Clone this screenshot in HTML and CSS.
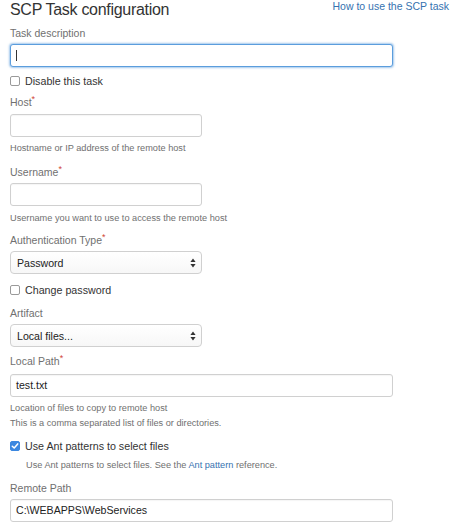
FILE: index.html
```html
<!DOCTYPE html>
<html>
<head>
<meta charset="utf-8">
<link rel="stylesheet" href="styles.css">
</head>
<body>
<div class="page">
  <div class="header">
    <h1 class="title">SCP Task configuration</h1>
    <a class="doc-link" href="#">How to use the SCP task</a>
  </div>

  <div class="label m5">Task description</div>
  <div class="input wide focused m3"><span class="caret"></span></div>

  <div class="check m6"><span class="box"></span><span>Disable this task</span></div>

  <div class="label m5">Host<span class="req">*</span></div>
  <div class="input short m4"></div>
  <div class="help m4">Hostname or IP address of the remote host</div>

  <div class="label m8">Username<span class="req">*</span></div>
  <div class="input short m3"></div>
  <div class="help m5">Username you want to use to access the remote host</div>

  <div class="label m6">Authentication Type<span class="req">*</span></div>
  <div class="select m3"><span>Password</span><span class="arrows"><svg width="6" height="10" viewBox="0 0 6 10"><path d="M3 0.5L5.6 4H0.4Z M3 9.5L0.4 6H5.6Z" fill="#333"/></svg></span></div>

  <div class="check m8"><span class="box"></span><span>Change password</span></div>

  <div class="label m7">Artifact</div>
  <div class="select m3"><span>Local files...</span><span class="arrows"><svg width="6" height="10" viewBox="0 0 6 10"><path d="M3 0.5L5.6 4H0.4Z M3 9.5L0.4 6H5.6Z" fill="#333"/></svg></span></div>

  <div class="label m6">Local Path<span class="req">*</span></div>
  <div class="input wide m5">test.txt</div>
  <div class="help m4">Location of files to copy to remote host</div>
  <div class="help">This is a comma separated list of files or directories.</div>

  <div class="check m7"><span class="box checked"><svg width="8" height="8" viewBox="0 0 8 8"><path d="M1.3 4.2L3.2 6L6.7 1.9" fill="none" stroke="#fff" stroke-width="1.5" stroke-linecap="round" stroke-linejoin="round"/></svg></span><span>Use Ant patterns to select files</span></div>
  <div class="help indent m4">Use Ant patterns to select files. See the <a href="#" class="inline-link">Ant pattern</a> reference.</div>

  <div class="label m7">Remote Path</div>
  <div class="input wide m3">C:\WEBAPPS\WebServices</div>
</div>
</body>
</html>
```

FILE: styles.css
```css
html, body {
  margin: 0;
  padding: 0;
  background: #fff;
}
body {
  font-family: "Liberation Sans", Arial, Helvetica, sans-serif;
  color: #333;
}
.page {
  padding: 0 0 0 10px;
}
.header {
  display: flex;
  justify-content: space-between;
  align-items: flex-start;
  height: 20px;
}
.title {
  margin: 0;
  font-size: 16px;
  letter-spacing: -0.3px;
  line-height: 20px;
  font-weight: normal;
  color: #333;
}
.doc-link {
  font-size: 10.5px;
  line-height: 12px;
  color: #3572b0;
  text-decoration: none;
  margin-right: 2px;
}
.label {
  font-size: 10.5px;
  line-height: 16px;
  height: 16px;
  color: #707070;
}
.req {
  color: #d04437;
  font-size: 9px;
  vertical-align: top;
  position: relative;
  top: -3px;
}
.m3 { margin-top: 3px; }
.m4 { margin-top: 4px; }
.m5 { margin-top: 5px; }
.m6 { margin-top: 6px; }
.m7 { margin-top: 7px; }
.m8 { margin-top: 8px; }
.input {
  box-sizing: border-box;
  height: 23px;
  border: 1px solid #d0d0d0;
  border-radius: 3px;
  background: #fff;
  font-size: 10.6px;
  line-height: 21px;
  padding: 0 5px;
  color: #222;
  box-shadow: inset 0 1px 1px rgba(0,0,0,0.04);
}
.input.wide { width: 383px; }
.input.short { width: 192px; }
.input.focused {
  border: 1px solid #5b9ddd;
  box-shadow: 0 0 2px 1px rgba(91,157,221,0.55);
  display: flex;
  align-items: center;
}
.caret {
  display: inline-block;
  width: 1px;
  height: 11px;
  background: #333;
}
.check {
  display: flex;
  align-items: center;
  height: 16px;
  font-size: 10.7px;
  color: #333;
}
.box {
  box-sizing: border-box;
  width: 10px;
  height: 10px;
  border: 1px solid #9a9a9a;
  border-radius: 2px;
  background: #fff;
  margin-right: 5px;
  display: flex;
  align-items: center;
  justify-content: center;
}
.box.checked {
  background: #3b87e0;
  border-color: #3b87e0;
}
.help {
  font-size: 9.2px;
  line-height: 15px;
  height: 15px;
  color: #707070;
}
.help.indent {
  padding-left: 16px;
}
.inline-link {
  color: #3572b0;
  text-decoration: none;
}
.select {
  box-sizing: border-box;
  width: 192px;
  height: 23px;
  border: 1px solid #d0d0d0;
  border-radius: 4px;
  background: linear-gradient(#ffffff, #f7f7f7);
  display: flex;
  align-items: center;
  justify-content: space-between;
  padding: 0 5px 0 6px;
  font-size: 10.6px;
  color: #222;
}
.arrows {
  display: flex;
  align-items: center;
}
```
